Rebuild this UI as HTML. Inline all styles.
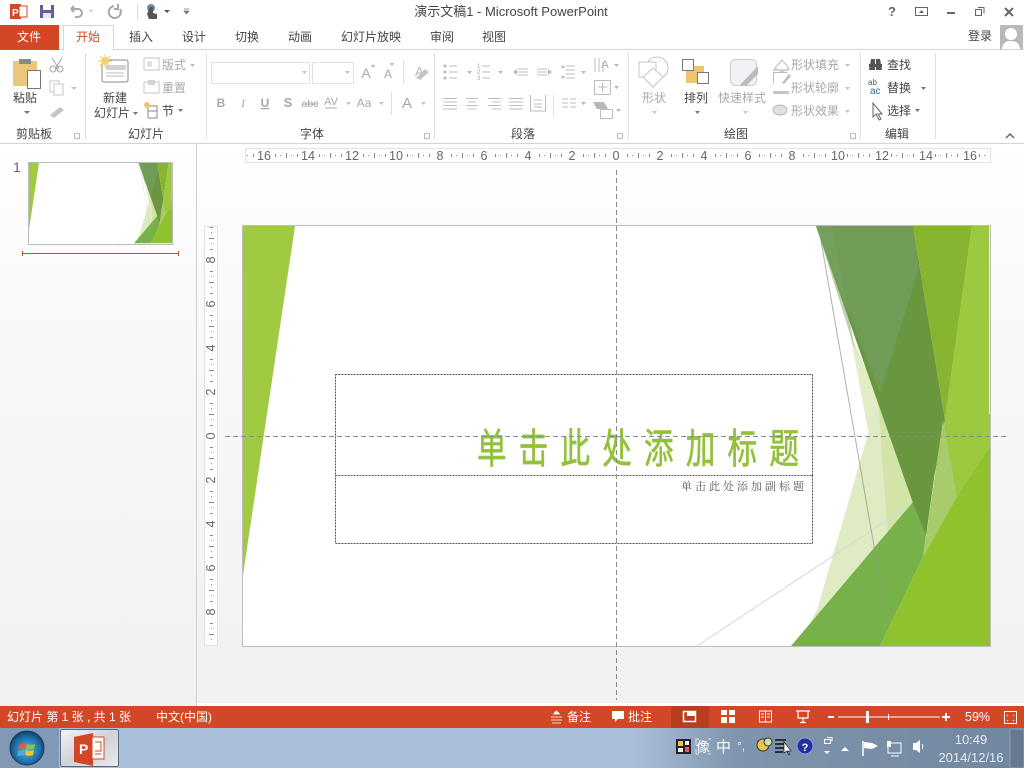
<!DOCTYPE html>
<html><head><meta charset="utf-8"><style>
html,body{margin:0;padding:0;width:1024px;height:768px;overflow:hidden;background:#f3f3f3}
svg{display:block;position:absolute;left:0;top:0}
text{font-family:"Liberation Sans","Noto Sans CJK SC",sans-serif;font-size:12px;fill:#444}
.g{fill:#a8a8a8}.c{text-anchor:middle}.w{fill:#fff}
.d{fill:none;stroke:#a8a8a8;stroke-width:1}
.k{fill:none;stroke:#666;stroke-width:1}
.n{fill:#666;font-size:12.5px;text-anchor:middle}
</style></head><body>
<svg width="1024" height="768" viewBox="0 0 1024 768" xmlns="http://www.w3.org/2000/svg">
<defs>
<linearGradient id="bgl" x1="0" y1="0" x2="0" y2="1"><stop offset="0" stop-color="#fff"/><stop offset=".35" stop-color="#f8f8f8"/><stop offset="1" stop-color="#f1f1f1"/></linearGradient>
<linearGradient id="tb" x1="0" y1="0" x2="1" y2="0"><stop offset="0" stop-color="#a8bfd9"/><stop offset=".62" stop-color="#a8bfd9"/><stop offset=".72" stop-color="#7f94ad"/><stop offset="1" stop-color="#71869f"/></linearGradient>
<linearGradient id="btn" x1="0" y1="0" x2="1" y2="1"><stop offset="0" stop-color="#f3f4f6"/><stop offset=".5" stop-color="#cfd2d6"/><stop offset="1" stop-color="#e9ebee"/></linearGradient>
<radialGradient id="orb" cx=".5" cy=".55" r=".55"><stop offset="0" stop-color="#4fb6e6"/><stop offset=".7" stop-color="#1c6da8"/><stop offset="1" stop-color="#0e3d66"/></radialGradient>
<pattern id="hr" x="616" y="148" width="22" height="16" patternUnits="userSpaceOnUse"><rect x="5" y="7" width="1" height="1" fill="#888"/><rect x="11" y="6" width="1" height="3" fill="#888"/><rect x="16" y="7" width="1" height="1" fill="#888"/><rect x="0" y="5" width="1" height="5" fill="#888"/></pattern>
<pattern id="vr" x="204" y="436" width="16" height="22" patternUnits="userSpaceOnUse"><rect x="7" y="5" width="1" height="1" fill="#888"/><rect x="6" y="11" width="3" height="1" fill="#888"/><rect x="7" y="16" width="1" height="1" fill="#888"/><rect x="5" y="0" width="5" height="1" fill="#888"/></pattern>
<clipPath id="cp"><rect x="243" y="226" width="747" height="420"/></clipPath>
<g id="slide" clip-path="url(#cp)">
<rect x="243" y="226" width="747" height="420" fill="#fff"/>
<polygon points="243,226 295,226 243,575" fill="#a0ca42"/>
<polygon points="850,333 888,540 913,503 880,400" fill="#e2edc8"/>
<polygon points="878,400 925,490 817,646 806,630 817,610" fill="#dfebc3"/>
<polygon points="878,400 888,540 913,503" fill="#d3e4a8"/>
<line x1="697" y1="646" x2="913" y2="503" stroke="#d6d8d2"/>
<polygon points="791,646 913,502 934,478 926,535 923,557 880,646" fill="#76b14a"/>
<line x1="820" y1="235" x2="888" y2="627" stroke="#8e9a88" stroke-opacity=".75"/>
<polygon points="913,503 934,478 926,535" fill="#4e9127"/>
<polygon points="816,226 913,226 945,420 934,478 926,535 913,503" fill="#6a963f"/>
<polygon points="816,226 913,226 919,268 880,393" fill="#719c57"/>
<polygon points="816,226 832,226 855,350" fill="#78a262" opacity=".5"/>
<polygon points="913,226 972,226 945,420" fill="#87b52f"/>
<polygon points="972,226 990,226 990,646 923,557 945,420" fill="#9cc93f"/>
<polygon points="880,646 923,557 957,497 990,447 990,646" fill="#90c22e"/>
<polygon points="943,420 957,497 923,557" fill="#a9cb6b"/>
<rect x="989" y="226" width="1" height="188" fill="#eef3e2"/>
</g>
</defs>
<rect width="1024" height="768" fill="#f3f3f3"/>
<!-- title bar and ribbon -->
<rect width="1024" height="143" fill="#fff"/>
<rect y="49" width="1024" height="1" fill="#d4d4d4"/>
<rect y="143" width="1024" height="1" fill="#d4d4d4"/>
<!-- left panel -->
<rect y="144" width="196" height="562" fill="url(#bgl)"/>
<rect x="196" y="144" width="1" height="562" fill="#d0d0d0"/>
<rect x="197" y="144" width="827" height="562" fill="url(#bgl)"/>
<rect x="197" y="703" width="827" height="3" fill="#fff"/>
<!-- QAT -->
<rect x="10" y="4" width="11" height="15" fill="#d24726"/><rect x="19" y="6" width="8" height="11" fill="#fff" stroke="#d24726"/>
<text x="12" y="16" style="font-size:10px;font-weight:700;fill:#fff">P</text>
<rect x="40" y="5" width="14" height="13" fill="#6a5a96"/><rect x="43" y="5" width="8" height="5" fill="#fff"/><rect x="43" y="13" width="8" height="5" fill="#e8e5f0"/>
<path d="M71 9h7a4 4 0 0 1 0 8h-3M71 9l3-3M71 9l3 3" class="d" style="stroke-width:2"/>
<path d="M89 10l2 2 2-2z" fill="#bbb"/>
<path d="M114 6a6 6 0 1 0 6 3M118 4v5h-4" class="d" style="stroke-width:2"/>
<rect x="137" y="4" width="1" height="15" fill="#d8d8d8"/>
<circle cx="151" cy="8" r="4" fill="#6d8aa8"/><path d="M150 7h3v6l4 1v5h-8l-2-5z" fill="#555"/>
<path d="M164 10l3 3 3-3z" fill="#555"/>
<path d="M184 9h5M184 11l2.500 3 2.500-3z" stroke="#777" fill="#777" stroke-width=".7"/>
<text x="511" y="16" class="c" style="font-size:13px;fill:#444">演示文稿1 - Microsoft PowerPoint</text>
<text x="892" y="16" class="c" style="font-size:13px;font-weight:700;fill:#666">?</text>
<rect x="915.500" y="7.500" width="12" height="8" class="k"/><path d="M919 13l2.500-3 2.500 3z" fill="#666"/>
<rect x="947" y="12" width="8" height="2" fill="#666"/>
<path d="M978 7.500h6v6M975.500 9.500h6v6h-6z" class="k"/>
<path d="M1005 8l8 8M1013 8l-8 8" stroke="#666" stroke-width="2"/>
<!-- tabs -->
<rect x="0" y="25" width="59" height="25" fill="#d24726"/>
<text x="29" y="41" class="c w">文件</text>
<path d="M63.500 50V25.500h50V50" fill="#fff" stroke="#d4d4d4"/><rect x="64" y="48" width="49" height="3" fill="#fff"/>
<text x="88" y="41" class="c" style="fill:#d24726">开始</text>
<text x="141" y="41" class="c">插入</text>
<text x="194" y="41" class="c">设计</text>
<text x="247" y="41" class="c">切换</text>
<text x="300" y="41" class="c">动画</text>
<text x="371" y="41" class="c">幻灯片放映</text>
<text x="442" y="41" class="c">审阅</text>
<text x="494" y="41" class="c">视图</text>
<text x="980" y="40" class="c">登录</text>
<rect x="1000" y="25" width="23" height="24" fill="#b9b9b9"/><circle cx="1011" cy="34" r="6" fill="#fff"/><path d="M1002 49c1-7 5-8 9-8s8 1 9 8z" fill="#fff"/>
<!-- separators -->
<g fill="#e0e0e0"><rect x="85" y="53" width="1" height="86"/><rect x="206" y="53" width="1" height="86"/><rect x="434" y="53" width="1" height="86"/><rect x="628" y="53" width="1" height="86"/><rect x="860" y="53" width="1" height="86"/><rect x="935" y="53" width="1" height="86"/></g>
<!-- clipboard -->
<rect x="13" y="61" width="24" height="25" fill="#eac77c"/><rect x="19" y="59" width="12" height="5" fill="#8a8a8a"/><rect x="27.500" y="70.500" width="13" height="18" fill="#fff" stroke="#777"/>
<text x="25" y="102" class="c">粘贴</text><path d="M24 111l3 3 3-3z" fill="#777"/>
<path d="M52 58l7 11M62 58l-7 11" class="d" style="stroke:#a5a5a5"/><circle cx="53" cy="69" r="3" class="d" style="stroke:#a5a5a5"/><circle cx="60" cy="69" r="3" class="d" style="stroke:#a5a5a5"/>
<rect x="50" y="81" width="9" height="11" class="d" style="stroke:#c4c4c4"/><rect x="54" y="84" width="9" height="11" fill="#fff" stroke="#c4c4c4"/><path d="M71 87l3 3 3-3z" fill="#c4c4c4"/>
<path d="M50 115l10-8 4 3-10 8z" fill="#c4c4c4"/>
<text x="34" y="138" class="c">剪贴板</text>
<path d="M74.500 133.500h5v5h-5z" fill="none" stroke="#aaa" stroke-width=".8"/>
<!-- slides -->
<rect x="102" y="60" width="26" height="22" rx="2" fill="#fff" stroke="#888"/><rect x="106" y="65" width="20" height="5" fill="#d2d2d2"/><path d="M106 73h18M106 76h18" stroke="#bbb"/>
<circle cx="105" cy="61" r="4" fill="#f3d26b"/><path d="M105 54v14M98 61h14M100 56l10 10M110 56l-10 10" stroke="#f3d26b"/>
<text x="115" y="102" class="c">新建</text><text x="112" y="117" class="c">幻灯片</text><path d="M133 112l2.500 3 2.500-3z" fill="#777"/>
<rect x="144" y="58" width="15" height="12" class="d" style="stroke:#c4c4c4"/><rect x="147" y="61" width="5" height="6" fill="#e0e0e0"/>
<text x="162" y="69" class="g">版式</text><path d="M190 64l2.500 3 2.500-3z" fill="#bbb"/>
<rect x="144" y="82" width="15" height="11" class="d" style="stroke:#c4c4c4"/><rect x="148" y="80" width="7" height="5" fill="#d2d2d2"/>
<text x="162" y="92" class="g">重置</text>
<rect x="148" y="106" width="9" height="12" class="k" style="stroke:#888"/><path d="M148 111h9" stroke="#888"/><circle cx="147" cy="105" r="3" fill="#eec46e"/>
<text x="162" y="115">节</text><path d="M178 109l2.500 3 2.500-3z" fill="#777"/>
<text x="146" y="138" class="c">幻灯片</text>
<!-- font -->
<rect x="211.500" y="62.500" width="98" height="21" fill="#fff" stroke="#e2e2e2"/><rect x="312.500" y="62.500" width="41" height="21" fill="#fff" stroke="#e2e2e2"/>
<path d="M302 71l2.500 3 2.500-3zM345 71l2.500 3 2.500-3z" fill="#c4c4c4"/>
<text x="366" y="78" class="g c" style="font-size:14px">A</text><path d="M373 64l2.500 3h-5z" fill="#bbb"/>
<text x="388" y="78" class="g c">A</text><path d="M392 66l2.500-3h-5z" fill="#bbb"/>
<rect x="403" y="60" width="1" height="24" fill="#e0e0e0"/>
<text x="415" y="76" style="font-size:13px;fill:#b5b5b5">A</text><path d="M416 78l9-9 4 3-9 8z" fill="#c4c4c4"/>
<text x="221" y="107" class="g c" style="font-weight:700">B</text>
<text x="243" y="107" class="g c" style="font-family:'Liberation Serif';font-style:italic">I</text>
<text x="265" y="107" class="g c" style="font-weight:700;text-decoration:underline">U</text>
<text x="288" y="107" class="g c" style="font-weight:700;font-size:13px">S</text>
<text x="310" y="107" class="g c" style="font-size:10.500px;text-decoration:line-through">abc</text>
<text x="331" y="105" class="g c" style="font-size:11px">AV</text><path d="M325 108h12" stroke="#aaa"/>
<text x="364" y="107" class="g c">Aa</text>
<text x="407" y="108" class="g c" style="font-size:15px">A</text>
<path d="M346 102l2.500 3 2.500-3zM379 102l2.500 3 2.500-3zM421 102l2.500 3 2.500-3z" fill="#c4c4c4"/>
<rect x="391" y="92" width="1" height="23" fill="#e0e0e0"/>
<text x="312" y="138" class="c">字体</text>
<path d="M424.500 133.500h5v5h-5z" fill="none" stroke="#aaa" stroke-width=".8"/>
<!-- paragraph -->
<g class="d" style="stroke:#bcbcbc">
<path d="M449 66h8M449 72h8M449 78h8M482 66h8M482 72h8M482 78h8M518 69h10M518 72h10M518 75h10M537 69h10M537 72h10M537 75h10M566 66h9M566 70h9M566 74h9M566 78h9"/>
<path d="M443 98.500h14M443 102h14M443 105.500h14M443 109h14M466 98.500h12M468 102h8M466 105.500h12M468 109h8M488 98.500h13M492 102h9M488 105.500h13M492 109h9M509 98.500h14M509 102h14M509 105.500h14M509 109h14M530.500 95v16h15V95M534 100h8M534 104h8M534 107h8M562 99h6M570 99h6M562 103h6M570 103h6M562 107h6M570 107h6"/>
<path d="M595 58v14M599 58v14M603 62v10M594.500 80.500h16v14h-16zM602.500 83v9M598 87h9"/>
<rect x="600.500" y="109.500" width="12" height="9"/>
</g>
<g fill="#b8b8b8"><circle cx="445" cy="66" r="1.500"/><circle cx="445" cy="72" r="1.500"/><circle cx="445" cy="78" r="1.500"/><path d="M467 71l2.500 3 2.500-3zM498 71l2.500 3 2.500-3zM581 71l2.500 3 2.500-3zM581 102l2.500 3 2.500-3zM614 64l2.500 3 2.500-3zM614 86l2.500 3 2.500-3zM616 109l2.500 3 2.500-3zM513 72l4-3v6zM552 72l-4-3v6zM561 68l2-3 2 3zM561 76l2 3 2-3z"/><path d="M593 102h11l4 7h-11z"/></g>
<text x="477" y="68" style="font-size:6px" class="g">1</text><text x="477" y="74" style="font-size:6px" class="g">2</text><text x="477" y="80" style="font-size:6px" class="g">3</text>
<text x="605" y="68" class="g c" style="font-size:11px">A</text>
<rect x="553" y="95" width="1" height="22" fill="#e0e0e0"/>
<text x="523" y="138" class="c">段落</text>
<path d="M617.500 133.500h5v5h-5z" fill="none" stroke="#aaa" stroke-width=".8"/>
<!-- drawing -->
<circle cx="657" cy="68" r="11" fill="#fff" stroke="#c4c4c4"/><rect x="639" y="62" width="17" height="15" fill="#fff" stroke="#c4c4c4"/><path d="M653 68l10 9-10 10-10-10z" fill="#fff" stroke="#c4c4c4"/>
<text x="654" y="102" class="g c">形状</text><path d="M652 111l2.500 3 2.500-3z" fill="#c4c4c4"/>
<rect x="686" y="66" width="18" height="17" fill="#eec46e"/><rect x="682.500" y="59.500" width="11" height="11" fill="#fff" stroke="#777"/><rect x="697.500" y="72.500" width="11" height="11" fill="#fff" stroke="#777"/>
<text x="696" y="102" class="c">排列</text><path d="M695 111l2.500 3 2.500-3z" fill="#777"/>
<rect x="730.500" y="59.500" width="26" height="26" rx="5" fill="#f2f1f5" stroke="#ccc"/><path d="M740 85l18-19v8l-12 12z" fill="#bbb"/>
<text x="742" y="102" class="g c">快速样式</text><path d="M743 111l2.500 3 2.500-3z" fill="#c4c4c4"/>
<path d="M775 68l7-8 7 8-7 4z" fill="#fff" stroke="#bbb"/><rect x="773" y="69" width="16" height="2" fill="#d0d0d0"/>
<text x="791" y="69" class="g">形状填充</text>
<path d="M773.500 83.500v-11h14" class="d" style="stroke:#bbb"/><path d="M782 83l7-9 2 2-7 8z" fill="#bbb"/><rect x="773" y="91" width="16" height="3" fill="#c4c4c4"/>
<text x="791" y="92" class="g">形状轮廓</text>
<ellipse cx="780" cy="110" rx="7" ry="5" fill="#e0e0e0" stroke="#bbb"/>
<text x="791" y="115" class="g">形状效果</text>
<path d="M845 64l2.500 3 2.500-3zM845 87l2.500 3 2.500-3zM845 110l2.500 3 2.500-3z" fill="#c4c4c4"/>
<text x="736" y="138" class="c">绘图</text>
<path d="M850.500 133.500h5v5h-5z" fill="none" stroke="#aaa" stroke-width=".8"/>
<!-- edit -->
<path d="M869 70l2-11h4v11zM876 70v-11h4l2 11z" fill="#555"/><rect x="869" y="64" width="13" height="3" fill="#555"/>
<text x="887" y="69">查找</text>
<text x="868" y="85" style="font-size:8px;fill:#555">ab</text><text x="870" y="94" style="font-size:10px;fill:#2b6ca3">ac</text>
<text x="887" y="92">替换</text><path d="M921 87l2.500 3 2.500-3z" fill="#777"/>
<path d="M873 103v14l3-3 3 6 2-1-3-5h4z" fill="#fff" stroke="#666"/>
<text x="887" y="115">选择</text><path d="M915 109l2.500 3 2.500-3z" fill="#777"/>
<text x="897" y="138" class="c">编辑</text>
<path d="M1006 138l4-4 4 4" fill="none" stroke="#666" stroke-width="1.500"/>
<!-- thumbnail -->
<text x="13" y="172" style="font-size:14px;fill:#666">1</text>
<rect x="28.500" y="162.500" width="144" height="82" fill="#fff" stroke="#bcbcbc"/>
<use href="#slide" transform="translate(-17.500 119.740) scale(.1914)"/>
<path d="M22 253.500h157M22.500 251v5M178.500 251v5" stroke="#b5533e" fill="none"/>
<!-- rulers -->
<rect x="245.500" y="148.500" width="745" height="14" fill="#fff" stroke="#e2e2e2"/>
<rect x="246" y="149" width="744" height="13" fill="url(#hr)"/>
<g fill="#fff"><rect x="255" y="150" width="18" height="11"/><rect x="299" y="150" width="18" height="11"/><rect x="343" y="150" width="18" height="11"/><rect x="387" y="150" width="18" height="11"/><rect x="433" y="150" width="14" height="11"/><rect x="477" y="150" width="14" height="11"/><rect x="521" y="150" width="14" height="11"/><rect x="565" y="150" width="14" height="11"/><rect x="609" y="150" width="14" height="11"/><rect x="653" y="150" width="14" height="11"/><rect x="697" y="150" width="14" height="11"/><rect x="741" y="150" width="14" height="11"/><rect x="785" y="150" width="14" height="11"/><rect x="829" y="150" width="18" height="11"/><rect x="873" y="150" width="18" height="11"/><rect x="917" y="150" width="18" height="11"/><rect x="961" y="150" width="18" height="11"/></g>
<g>
<text class="n" x="264" y="160">16</text><text class="n" x="308" y="160">14</text><text class="n" x="352" y="160">12</text><text class="n" x="396" y="160">10</text><text class="n" x="440" y="160">8</text><text class="n" x="484" y="160">6</text><text class="n" x="528" y="160">4</text><text class="n" x="572" y="160">2</text><text class="n" x="616" y="160">0</text><text class="n" x="660" y="160">2</text><text class="n" x="704" y="160">4</text><text class="n" x="748" y="160">6</text><text class="n" x="792" y="160">8</text><text class="n" x="838" y="160">10</text><text class="n" x="882" y="160">12</text><text class="n" x="926" y="160">14</text><text class="n" x="970" y="160">16</text>
</g>
<rect x="204.500" y="226.500" width="13" height="419" fill="#fff" stroke="#e2e2e2"/>
<rect x="205" y="227" width="12" height="418" fill="url(#vr)"/>
<g fill="#fff"><rect x="206" y="254" width="10" height="12"/><rect x="206" y="298" width="10" height="12"/><rect x="206" y="342" width="10" height="12"/><rect x="206" y="386" width="10" height="12"/><rect x="206" y="430" width="10" height="12"/><rect x="206" y="474" width="10" height="12"/><rect x="206" y="518" width="10" height="12"/><rect x="206" y="562" width="10" height="12"/><rect x="206" y="606" width="10" height="12"/></g>
<g>
<text class="n" transform="translate(215 260) rotate(-90)">8</text><text class="n" transform="translate(215 304) rotate(-90)">6</text><text class="n" transform="translate(215 348) rotate(-90)">4</text><text class="n" transform="translate(215 392) rotate(-90)">2</text><text class="n" transform="translate(215 436) rotate(-90)">0</text><text class="n" transform="translate(215 480) rotate(-90)">2</text><text class="n" transform="translate(215 524) rotate(-90)">4</text><text class="n" transform="translate(215 568) rotate(-90)">6</text><text class="n" transform="translate(215 612) rotate(-90)">8</text>
</g>
<!-- slide -->
<rect x="242.500" y="225.500" width="748" height="421" fill="#fff" stroke="#bdbdbd"/>
<use href="#slide"/>
<rect x="335.500" y="374.500" width="477" height="101" fill="none" stroke="#555" stroke-dasharray="2 1"/>
<rect x="335.500" y="475.500" width="477" height="68" fill="none" stroke="#555" stroke-dasharray="2 1"/>
<text transform="translate(477 463) scale(.72 1)" x="0 58 116 174 232 290 348 406" style="font-size:41px;fill:#93c13c;stroke:#93c13c;stroke-width:.7px">单击此处添加标题</text>
<text x="681" y="490" style="font-family:'Noto Serif CJK SC','Liberation Serif',serif;font-size:11px;fill:#5a5a5a;letter-spacing:3px">单击此处添加副标题</text>
<path d="M616.500 170V700" stroke="#8a8a8a" stroke-dasharray="5 3"/>
<path d="M225 436.500H1006" stroke="#8a8a8a" stroke-dasharray="5 3"/>
<!-- status -->
<rect y="706" width="1024" height="22" fill="#d24726"/>
<rect x="671" y="706" width="38" height="22" fill="#b83e20"/>
<text x="7" y="721" class="w">幻灯片 第 1 张 , 共 1 张</text>
<text x="156" y="721" class="w">中文(中国)</text>
<path d="M551 717h11M551 720h11M552 723h9M556.500 711l3 3h-6z" stroke="#fff" fill="#fff" stroke-width=".8"/>
<text x="567" y="721" class="w">备注</text>
<path d="M612 711h12v8h-6l-3 3v-3h-3z" fill="#fff"/>
<text x="628" y="721" class="w">批注</text>
<rect x="683.500" y="711.500" width="12" height="10" fill="none" stroke="#fff" stroke-width="1.500"/><rect x="687" y="712" width="8" height="4" fill="#fff"/>
<g fill="#fff"><rect x="721" y="710" width="6" height="5"/><rect x="729" y="710" width="6" height="5"/><rect x="721" y="717" width="6" height="6"/><rect x="729" y="717" width="6" height="6"/></g>
<path d="M759.500 711h12v11h-12zM765.500 711v11M761 714h3M761 717h3M767 714h3M767 717h3" stroke="#fff" fill="none"/>
<path d="M796 711h14M798 711v7h10v-7M803 718v4M800 722.500h6" stroke="#fff" fill="none" stroke-width="1.200"/>
<rect x="828" y="716" width="6" height="2" fill="#fff"/>
<rect x="838" y="716.500" width="102" height="1" fill="#fff"/><rect x="866" y="711" width="3" height="12" fill="#fff"/><rect x="888" y="714" width="1" height="6" fill="#fff"/>
<path d="M942 717h8M946 713v8" stroke="#fff" stroke-width="2"/>
<text x="965" y="721" class="w" style="font-size:12.500px">59%</text>
<rect x="1004.500" y="711.500" width="12" height="12" fill="none" stroke="#fff"/><path d="M1008 715l-1 1M1013 715l1 1M1008 720l-1 1M1013 720l1 1" stroke="#fff"/>
<!-- taskbar -->
<rect y="728" width="1024" height="40" fill="url(#tb)"/>
<rect y="728" width="59" height="40" fill="#8199b4"/>
<circle cx="27" cy="748" r="17" fill="url(#orb)" stroke="#233a55"/>
<path d="M19 745c3-2 5-2 7-1l-1 5c-2-1-5-1-7 1z" fill="#ea5a2e"/><path d="M27 744c3 1 5 1 8 0l-1 5c-3 1-5 0-8-1z" fill="#8cc63f"/><path d="M18 751c2-1 5-1 7 0l-1 5c-2-1-5-1-7 1z" fill="#4fa7e3"/><path d="M26 750c3 1 5 1 8 0l-1 5c-3 1-5 1-8 0z" fill="#f3c623"/>
<rect x="60.500" y="729.500" width="58" height="37" rx="2" fill="url(#btn)" stroke="#5a6a7d"/>
<path d="M74 737l19-4v33l-19-4z" fill="#d24726"/><rect x="92" y="737" width="12" height="22" fill="#fff" stroke="#d24726"/>
<text x="79" y="754" style="font-size:14px;font-weight:700;fill:#fff">P</text>
<path d="M95 742h6v9h-6M95 754h6" stroke="#d24726" fill="none"/>
<rect x="676" y="739" width="15" height="15" fill="#222"/><rect x="678" y="741" width="5" height="5" fill="#e8c64a"/><rect x="685" y="747" width="4" height="5" fill="#e05a6a"/><rect x="678" y="748" width="5" height="4" fill="#eee"/><rect x="685" y="741" width="4" height="4" fill="#eee"/>
<text x="696" y="752" style="font-size:14px;fill:#fff">像</text>
<path d="M696 745v-6h3M711 739h-3M696 749v5h3M711 754h-3" stroke="#fff" fill="none" stroke-opacity=".7"/>
<text x="716" y="752" style="font-size:15px;fill:#fff">中</text>
<text x="737" y="750" style="font-size:12px;fill:#fff">°,</text>
<circle cx="763" cy="745" r="6" fill="#e8c64a" stroke="#333"/><circle cx="768" cy="742" r="4" fill="#cfe0b0" stroke="#333"/>
<path d="M775 740h11M775 744h11M775 748h11M775 752h8" stroke="#111" stroke-width="1.500"/><path d="M784 742v11l3-2 2 4 1-1-2-3h3z" fill="#fff" stroke="#000" stroke-width=".6"/>
<circle cx="805" cy="746" r="8" fill="#2230a5" stroke="#8fa0e0"/><text x="805" y="751" class="c w" style="font-size:11px;font-weight:700">?</text>
<path d="M824.500 739.500h6v4h-6zM827 737.500h5v4" stroke="#fff" fill="none"/><path d="M824 751l3 3 3-3z" fill="#fff"/>
<path d="M841 751l4-4 4 4z" fill="#fff"/>
<path d="M863 741v15" stroke="#fff" stroke-width="1.500"/><path d="M864 742l8 1 6 3-6 3-8-1z" fill="#fff"/>
<rect x="888" y="743" width="13" height="10" fill="none" stroke="#fff"/><rect x="887" y="741" width="4" height="6" fill="#fff"/><path d="M891 756h8" stroke="#fff"/>
<path d="M913 743v7h3l4 3v-13l-4 3z" fill="#fff"/><path d="M922 744c1 1 1 4 0 5" stroke="#fff" fill="none"/>
<text x="971" y="744" class="c" style="font-size:13px;fill:#e6ecf3">10:49</text>
<text x="971" y="762" class="c" style="font-size:13px;fill:#e6ecf3">2014/12/16</text>
<rect x="1010" y="729" width="14" height="39" fill="#66798f" stroke="#8ea0b4"/>
</svg>
</body></html>
